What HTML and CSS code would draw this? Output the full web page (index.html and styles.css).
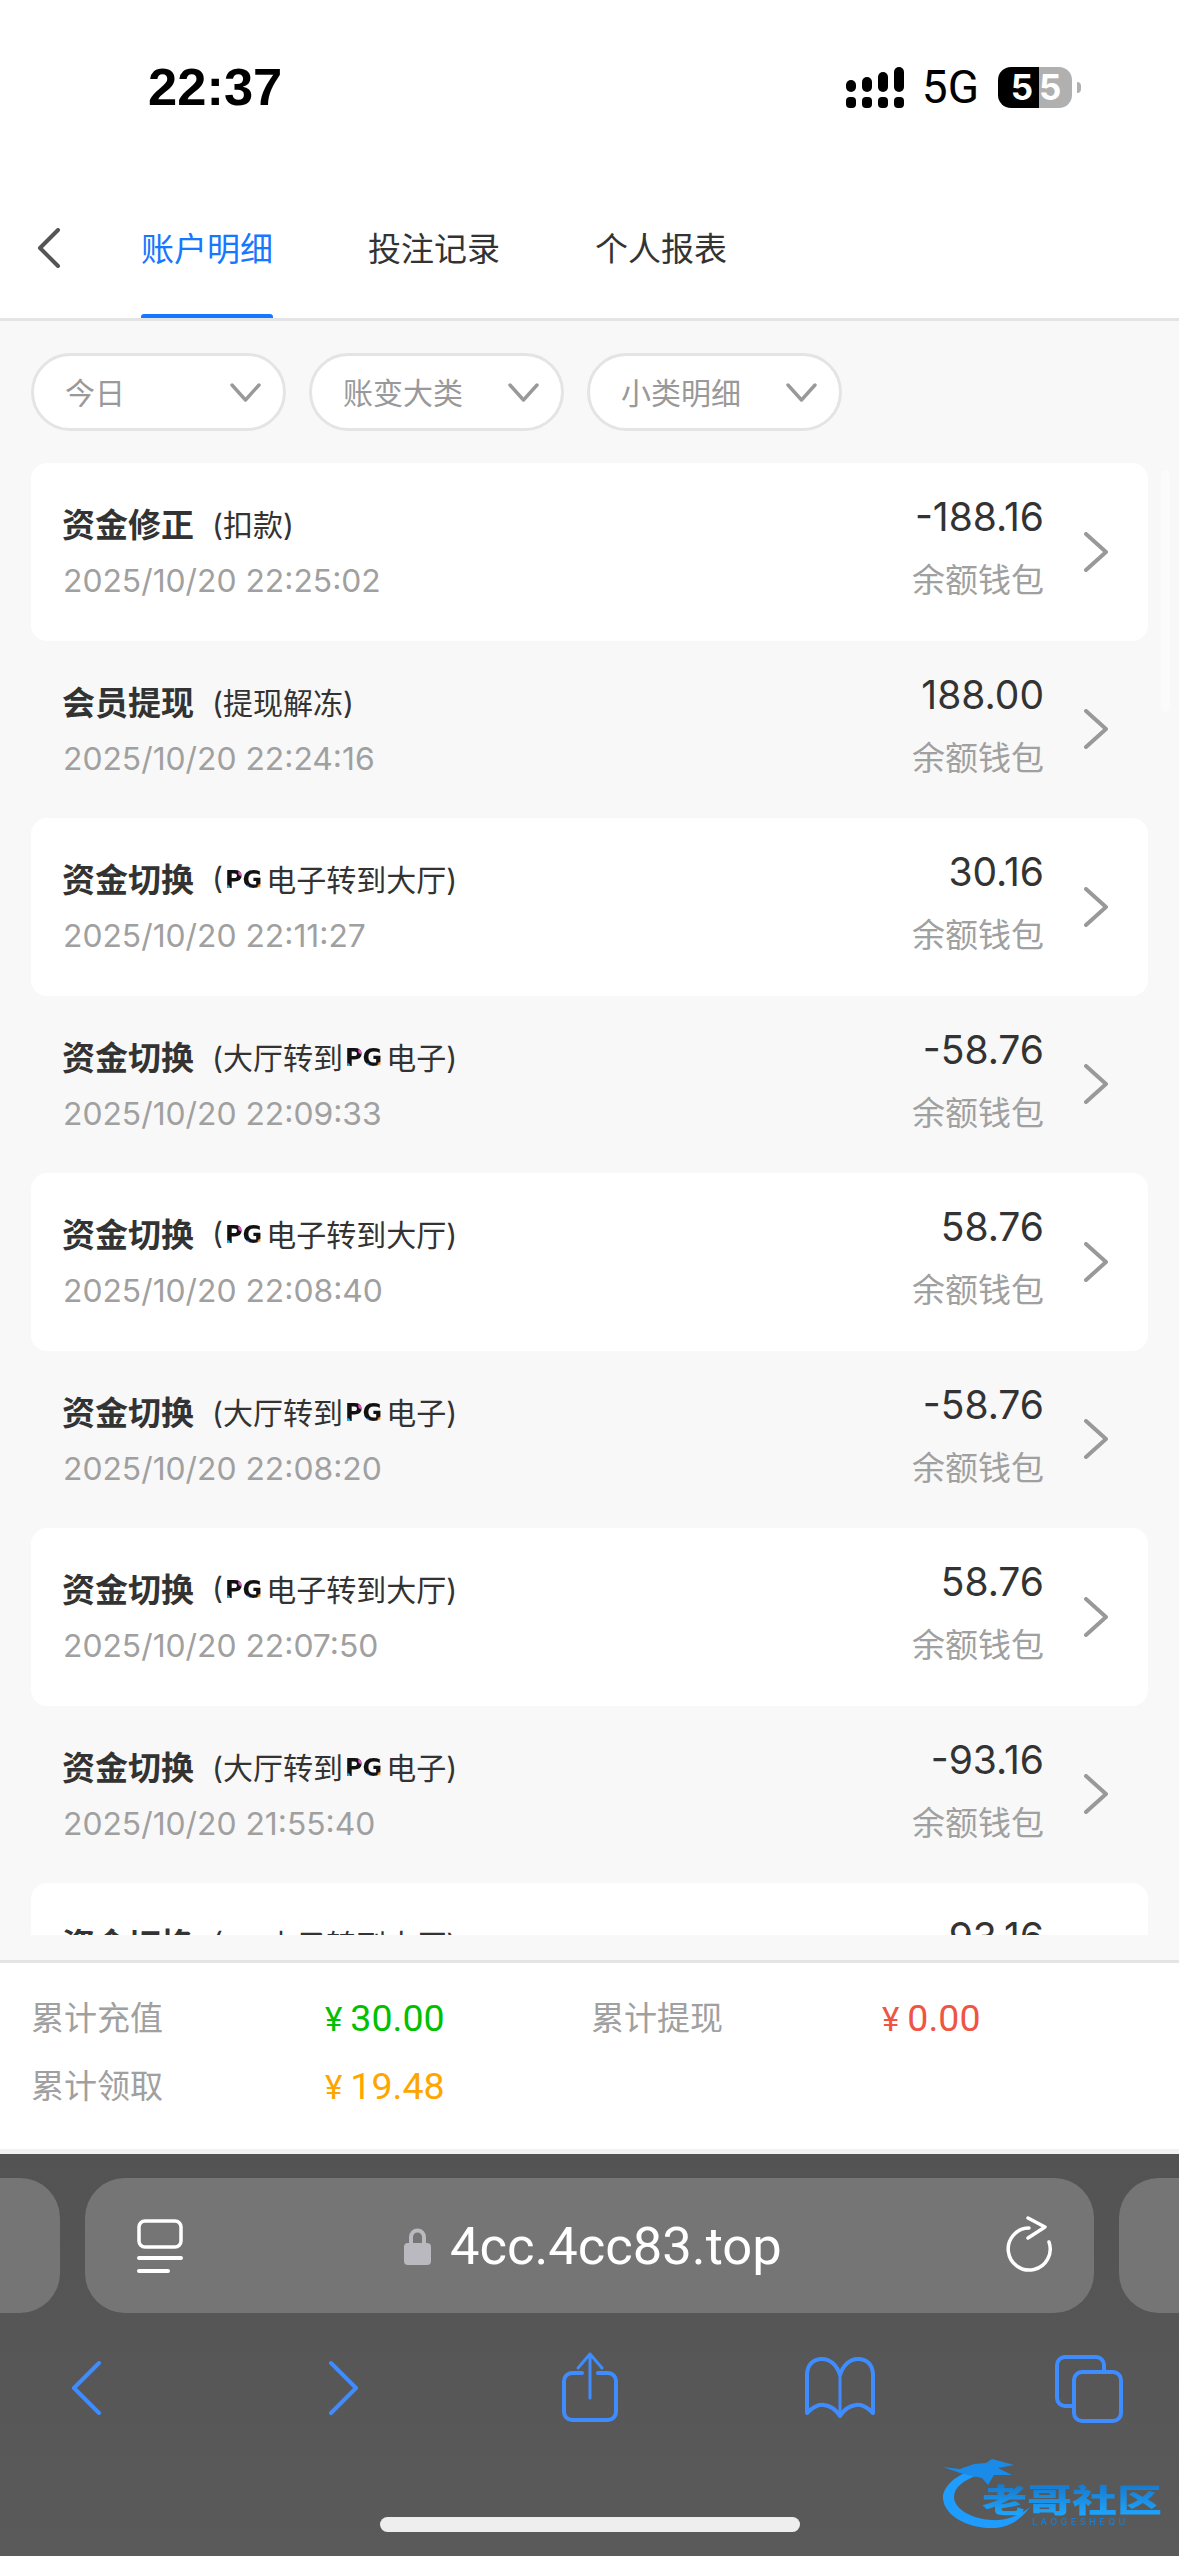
FILE: index.html
```html
<!DOCTYPE html>
<html lang="zh-CN">
<head>
<meta charset="utf-8">
<title>账户明细</title>
<link rel="stylesheet" href="styles.css">
</head>
<body>
<div class="phone">
  <header class="top">
    <div class="status">
      <span class="clock">22:37</span>
      <div class="status-right">
        <svg class="signal" width="58" height="41" viewBox="0 0 58 41" fill="#000">
          <rect x="0" y="13" width="10" height="12" rx="5"/><rect x="16" y="10" width="10" height="15" rx="5"/><rect x="32" y="5" width="10" height="20" rx="5"/><rect x="48" y="0" width="10" height="25" rx="5"/>
          <rect x="0" y="30" width="10" height="11" rx="4"/><rect x="16" y="30" width="10" height="11" rx="4"/><rect x="32" y="30" width="10" height="11" rx="4"/><rect x="48" y="30" width="10" height="11" rx="4"/>
        </svg>
        <span class="net">5G</span>
        <div class="battery"><span class="bat-l">5</span><span class="bat-r">5</span></div>
        <span class="bat-tip"></span>
      </div>
    </div>
    <nav class="tabs">
      <svg class="back" width="24" height="40" viewBox="0 0 24 40" fill="none" stroke="#555" stroke-width="4" stroke-linecap="round" stroke-linejoin="round"><path d="M21 2 L3 20 L21 38"/></svg>
      <span class="tab active">账户明细</span>
      <span class="tab">投注记录</span>
      <span class="tab">个人报表</span>
    </nav>
  </header>

  <main class="content">
    <div class="filters">
      <div class="pill"><span>今日</span><svg width="31" height="19" viewBox="0 0 31 19" fill="none" stroke="#999" stroke-width="3.4" stroke-linecap="round" stroke-linejoin="round"><path d="M2 2 L15.500 17 L29 2"/></svg></div>
      <div class="pill"><span>账变大类</span><svg width="31" height="19" viewBox="0 0 31 19" fill="none" stroke="#999" stroke-width="3.4" stroke-linecap="round" stroke-linejoin="round"><path d="M2 2 L15.500 17 L29 2"/></svg></div>
      <div class="pill"><span>小类明细</span><svg width="31" height="19" viewBox="0 0 31 19" fill="none" stroke="#999" stroke-width="3.4" stroke-linecap="round" stroke-linejoin="round"><path d="M2 2 L15.500 17 L29 2"/></svg></div>
    </div>

    <div class="scroll-thumb"></div>

    <div class="list" id="list">
      <article class="row card">
        <div class="left"><div class="title"><b>资金修正</b><span class="sub">(扣款)</span></div><div class="time">2025/10/20 22:25:02</div></div>
        <div class="right"><div class="amount">-188.16</div><div class="wallet">余额钱包</div></div>
        <svg class="arrow" width="25" height="40" viewBox="0 0 25 40" fill="none" stroke="#999" stroke-width="4" stroke-linecap="round" stroke-linejoin="round"><path d="M3 2 L23 20 L3 38"/></svg>
      </article>
      <article class="row">
        <div class="left"><div class="title"><b>会员提现</b><span class="sub">(提现解冻)</span></div><div class="time">2025/10/20 22:24:16</div></div>
        <div class="right"><div class="amount">188.00</div><div class="wallet">余额钱包</div></div>
        <svg class="arrow" width="25" height="40" viewBox="0 0 25 40" fill="none" stroke="#999" stroke-width="4" stroke-linecap="round" stroke-linejoin="round"><path d="M3 2 L23 20 L3 38"/></svg>
      </article>
      <article class="row card">
        <div class="left"><div class="title"><b>资金切换</b><span class="sub">(<i class="pg">PG</i>电子转到大厅)</span></div><div class="time">2025/10/20 22:11:27</div></div>
        <div class="right"><div class="amount">30.16</div><div class="wallet">余额钱包</div></div>
        <svg class="arrow" width="25" height="40" viewBox="0 0 25 40" fill="none" stroke="#999" stroke-width="4" stroke-linecap="round" stroke-linejoin="round"><path d="M3 2 L23 20 L3 38"/></svg>
      </article>
      <article class="row">
        <div class="left"><div class="title"><b>资金切换</b><span class="sub">(大厅转到<i class="pg">PG</i>电子)</span></div><div class="time">2025/10/20 22:09:33</div></div>
        <div class="right"><div class="amount">-58.76</div><div class="wallet">余额钱包</div></div>
        <svg class="arrow" width="25" height="40" viewBox="0 0 25 40" fill="none" stroke="#999" stroke-width="4" stroke-linecap="round" stroke-linejoin="round"><path d="M3 2 L23 20 L3 38"/></svg>
      </article>
      <article class="row card">
        <div class="left"><div class="title"><b>资金切换</b><span class="sub">(<i class="pg">PG</i>电子转到大厅)</span></div><div class="time">2025/10/20 22:08:40</div></div>
        <div class="right"><div class="amount">58.76</div><div class="wallet">余额钱包</div></div>
        <svg class="arrow" width="25" height="40" viewBox="0 0 25 40" fill="none" stroke="#999" stroke-width="4" stroke-linecap="round" stroke-linejoin="round"><path d="M3 2 L23 20 L3 38"/></svg>
      </article>
      <article class="row">
        <div class="left"><div class="title"><b>资金切换</b><span class="sub">(大厅转到<i class="pg">PG</i>电子)</span></div><div class="time">2025/10/20 22:08:20</div></div>
        <div class="right"><div class="amount">-58.76</div><div class="wallet">余额钱包</div></div>
        <svg class="arrow" width="25" height="40" viewBox="0 0 25 40" fill="none" stroke="#999" stroke-width="4" stroke-linecap="round" stroke-linejoin="round"><path d="M3 2 L23 20 L3 38"/></svg>
      </article>
      <article class="row card">
        <div class="left"><div class="title"><b>资金切换</b><span class="sub">(<i class="pg">PG</i>电子转到大厅)</span></div><div class="time">2025/10/20 22:07:50</div></div>
        <div class="right"><div class="amount">58.76</div><div class="wallet">余额钱包</div></div>
        <svg class="arrow" width="25" height="40" viewBox="0 0 25 40" fill="none" stroke="#999" stroke-width="4" stroke-linecap="round" stroke-linejoin="round"><path d="M3 2 L23 20 L3 38"/></svg>
      </article>
      <article class="row">
        <div class="left"><div class="title"><b>资金切换</b><span class="sub">(大厅转到<i class="pg">PG</i>电子)</span></div><div class="time">2025/10/20 21:55:40</div></div>
        <div class="right"><div class="amount">-93.16</div><div class="wallet">余额钱包</div></div>
        <svg class="arrow" width="25" height="40" viewBox="0 0 25 40" fill="none" stroke="#999" stroke-width="4" stroke-linecap="round" stroke-linejoin="round"><path d="M3 2 L23 20 L3 38"/></svg>
      </article>
      <article class="row card">
        <div class="left"><div class="title"><b>资金切换</b><span class="sub">(<i class="pg">PG</i>电子转到大厅)</span></div><div class="time">2025/10/20 21:55:10</div></div>
        <div class="right"><div class="amount">93.16</div><div class="wallet">余额钱包</div></div>
        <svg class="arrow" width="25" height="40" viewBox="0 0 25 40" fill="none" stroke="#999" stroke-width="4" stroke-linecap="round" stroke-linejoin="round"><path d="M3 2 L23 20 L3 38"/></svg>
      </article>
    </div>
  </main>

  <section class="stats">
    <span class="stat-label">累计充值</span><span class="stat-value green"><em>¥</em>30.00</span>
    <span class="stat-label">累计提现</span><span class="stat-value red"><em>¥</em>0.00</span>
    <span class="stat-label">累计领取</span><span class="stat-value orange"><em>¥</em>19.48</span>
  </section>
  <div class="stats-edge"></div>

  <footer class="browser">
    <div class="address-row">
      <div class="stub stub-left"></div>
      <div class="address">
        <svg class="page-icon" width="46" height="55" viewBox="0 0 46 55" fill="none" stroke="#fff" stroke-linecap="round">
          <rect x="2" y="2" width="42" height="26" rx="6" stroke-width="3.500"/>
          <path d="M2 39 H44" stroke-width="4"/><path d="M2 52 H31" stroke-width="4"/>
        </svg>
        <div class="url">
          <svg class="lock" width="27" height="38" viewBox="0 0 27 38"><path d="M7 18 V10 a6.500 6.500 0 0 1 13 0 V18" fill="none" stroke="#b9b9bf" stroke-width="4"/><rect x="0" y="16" width="27" height="22" rx="4" fill="#b9b9bf"/></svg>
          <span>4cc.4cc83.top</span>
        </div>
        <svg class="reload" width="48" height="56" viewBox="0 0 48 56" fill="none" stroke="#fff" stroke-width="3.500" stroke-linecap="round" stroke-linejoin="round">
          <path d="M24 12 A21 21 0 1 0 44 26"/><path d="M23 2 L40 11 L23 22"/>
        </svg>
      </div>
      <div class="stub stub-right"></div>
    </div>
    <div class="toolbar">
      <svg class="t-back" width="30" height="72" viewBox="0 0 30 72" fill="none" stroke="#3f8cff" stroke-width="4" stroke-linecap="round" stroke-linejoin="round"><path d="M28 12 L3 37 L28 62"/></svg>
      <svg class="t-forward" width="30" height="72" viewBox="0 0 30 72" fill="none" stroke="#3f8cff" stroke-width="4" stroke-linecap="round" stroke-linejoin="round"><path d="M2 12 L27 37 L2 62"/></svg>
      <svg class="t-share" width="56" height="72" viewBox="0 0 56 72" fill="none" stroke="#3f8cff" stroke-linecap="round" stroke-linejoin="round">
        <path d="M20 22 H10 a8 8 0 0 0 -8 8 V61 a8 8 0 0 0 8 8 H46 a8 8 0 0 0 8 -8 V30 a8 8 0 0 0 -8 -8 H36" stroke-width="4"/>
        <path d="M28 47 V3 M16 17 L28 3 L40 17" stroke-width="3"/>
      </svg>
      <svg class="t-book" width="70" height="72" viewBox="0 0 70 72" fill="none" stroke="#3f8cff" stroke-width="4" stroke-linecap="round" stroke-linejoin="round">
        <path d="M35 24 C32 14 25 8 17 8 C8 8 2 14 2 24 V62 C8 56 13 53 19 54 C26 55 32 60 35 65 C38 60 44 55 51 54 C57 53 62 56 68 62 V24 C68 14 62 8 53 8 C45 8 38 14 35 24 Z"/>
        <path d="M35 24 V65" stroke-width="3"/>
      </svg>
      <svg class="t-tabs" width="68" height="72" viewBox="0 0 68 72" fill="none" stroke="#3f8cff" stroke-width="4" stroke-linecap="round" stroke-linejoin="round">
        <rect x="19" y="21" width="47" height="49" rx="8"/>
        <path d="M49 19 V14 a8 8 0 0 0 -8 -8 H10 a8 8 0 0 0 -8 8 V47 a8 8 0 0 0 8 8 H17"/>
      </svg>
    </div>
    <div class="home-bar"></div>
    <div class="watermark">
      <svg class="dragon" width="100" height="75" viewBox="0 0 100 75">
        <path fill="#1e9dff" d="M30 15 C10 22 0 34 1 44 C3 62 28 74 52 73 C66 72 78 66 88 52 C76 62 62 66 50 65 C30 64 12 54 12 42 C12 32 22 25 36 20 Z"/>
        <path fill="#1a8be8" d="M1 12 L18 14 L32 9 L44 8 L50 4 L72 10 L56 13 L70 20 L52 20 L46 30 L40 23 L30 21 L18 18 Z"/>
      </svg>
      <span class="wm-title">老哥社区</span>
      <span class="wm-sub">LAOGESHEQU</span>
    </div>
  </footer>
</div>
</body>
</html>
```

FILE: styles.css
```css
* { box-sizing: border-box; }
html, body { margin: 0; padding: 0; }
body { width: 1179px; height: 2556px; overflow: hidden; background: #fff; font-family: "Noto Sans CJK SC", "Noto Sans", sans-serif; }

.phone { position: relative; width: 1179px; height: 2556px; display: flex; flex-direction: column; overflow: hidden; }

/* header */
.top { height: 321px; background: #fff; border-bottom: 3px solid #e4e4e4; flex: none; }
.status { height: 178px; display: flex; justify-content: space-between; align-items: flex-start; padding: 58px 98px 0 148px; }
.clock { font: 700 52.5px/58px "Liberation Sans", sans-serif; color: #000; }
.status-right { display: flex; align-items: center; padding-top: 9px; }
.signal { display: block; }
.net { font: 400 46px/41px Roboto, sans-serif; color: #000; margin-left: 18px; }
.battery { display: flex; width: 74px; height: 41px; margin-left: 19px; border-radius: 13px; overflow: hidden; font: 700 35px/41px Inter, sans-serif; color: #fff; }
.bat-l { width: 41px; background: #000; text-align: right; padding-right: 6px; }
.bat-r { width: 33px; background: #b0b0b0; text-align: left; }
.bat-tip { width: 4px; height: 11px; margin-left: 5px; background: #b0b0b0; border-radius: 0 6px 6px 0; }

.tabs { height: 140px; display: flex; align-items: center; padding-left: 37px; position: relative; }
.back { display: block; margin-right: 80px; }
.tab { height: 140px; line-height: 138px; font-size: 33px; color: #333; margin-right: 95px; position: relative; }
.tab.active { color: #1677ff; }
.tab.active::after { content: ""; position: absolute; left: 0; right: 0; bottom: 0; height: 4px; background: #1677ff; border-radius: 3px 3px 0 0; }

/* content */
.content { position: relative; flex: none; height: 1639px; background: #f8f8f8; padding: 32px 31px 0; }
.filters { display: flex; gap: 23px; height: 78px; margin-bottom: 32px; }
.pill { width: 255px; height: 78px; display: flex; justify-content: space-between; align-items: center; padding: 0 22px 2px 31px; background: #fff; border: 3px solid #e4e4e4; border-radius: 39px; font-size: 30px; color: #999; }
.pill svg { display: block; margin-top: 2px; }

.scroll-thumb { position: absolute; left: 1161px; top: 149px; width: 9px; height: 242px; background: #fbfbfb; border-radius: 5px; }

.list { height: 1472px; overflow: hidden; }
.row { display: flex; align-items: flex-start; height: 177.5px; padding-right: 40px; border-radius: 16px; }
.row.card { background: #fff; }
.left { flex: 1; padding: 35px 0 0 32px; }
.title { display: flex; align-items: center; height: 50px; color: #333; }
.title b { font-size: 33px; font-weight: 700; margin-left: -1px; }
.sub { font-size: 30px; margin-left: 18px; display: inline-flex; align-items: center; font-family: Inter, "Noto Sans CJK SC", sans-serif; }
.pg { font: 700 24px/1 "DejaVu Sans", sans-serif; margin: 4px 4px 0 2px; color: transparent; background-color: #111; background-image: radial-gradient(circle 4px at 2px 85%, #19b5ff 70%, transparent), radial-gradient(circle 4px at 45% 20%, #e84fd0 70%, transparent), radial-gradient(circle 4px at 58% 85%, #2a7fff 70%, transparent), radial-gradient(circle 4px at 97% 80%, #ff8a1e 70%, transparent); -webkit-background-clip: text; background-clip: text; font-style: normal; }
.time { margin-top: 8px; font: 400 31.8px/50px Inter, sans-serif; color: #a0a0a0; }
.right { padding-top: 29px; text-align: right; }
.amount { font: 400 39px/50px Inter, sans-serif; color: #333; }
.wallet { margin-top: 11px; font-size: 33px; line-height: 50px; color: #a0a0a0; }
.arrow { display: block; align-self: center; margin-left: 39px; }

/* stats */
.stats { flex: none; height: 189px; background: #fff; border-top: 3px solid #e4e4e4; padding: 22px 0 0 31px; display: grid; grid-template-columns: 294px 266px 291px 1fr; grid-auto-rows: 68px; align-items: center; }
.stat-label { font-size: 33px; color: #a0a0a0; padding-bottom: 6px; }
.stat-value { font: 400 37.5px/1 Roboto, sans-serif; }
.stat-value em { font-style: normal; font-size: 33px; margin-right: 8px; }
.green { color: #00c000; }
.red { color: #ee5544; }
.orange { color: #ffa500; }
.stats-edge { flex: none; height: 5px; background: #f2f2f2; }

/* browser chrome */
.browser { flex: 1; position: relative; background: linear-gradient(#535353, #5a5a5a); padding-top: 24px; }
.address-row { display: flex; height: 135px; gap: 25px; margin-left: -60px; width: 1300px; }
.stub { width: 120px; height: 135px; background: #757575; border-radius: 40px; flex: none; }
.stub-right { width: 150px; }
.address { width: 1009px; height: 135px; background: #757575; border-radius: 40px; display: flex; align-items: center; position: relative; flex: none; }
.page-icon { position: absolute; left: 52px; top: 41px; }
.url { display: flex; align-items: center; margin-left: 319px; color: #fff; font: 400 52.5px/60px Roboto, sans-serif; }
.lock { display: block; margin-right: 19px; }
.reload { position: absolute; left: 920px; top: 38px; }

.toolbar { display: flex; align-items: flex-start; margin-top: 38px; height: 72px; }
.toolbar svg { display: block; flex: none; }
.t-back { margin-left: 71px; }
.t-forward { margin-left: 228px; }
.t-share { margin-left: 203px; }
.t-book { margin-left: 187px; }
.t-tabs { margin-left: 180px; }

.home-bar { width: 420px; height: 15px; margin: 94px auto 0; background: #eee; border-radius: 8px; }

.watermark { position: absolute; left: 942px; top: 301px; width: 222px; height: 75px; filter: blur(0.6px); }
.dragon { position: absolute; left: 0; top: 0; }
.wm-title { position: absolute; left: 40px; top: 16px; font-size: 45px; font-weight: 900; line-height: 54px; white-space: nowrap; transform: scaleY(0.72); background: linear-gradient(#1671c4, #1fa8ff); -webkit-background-clip: text; background-clip: text; color: transparent; }
.wm-sub { position: absolute; left: 90px; top: 62px; font: 500 9px/10px Inter, sans-serif; letter-spacing: 3.500px; color: #1a7fd0; white-space: nowrap; }
```
